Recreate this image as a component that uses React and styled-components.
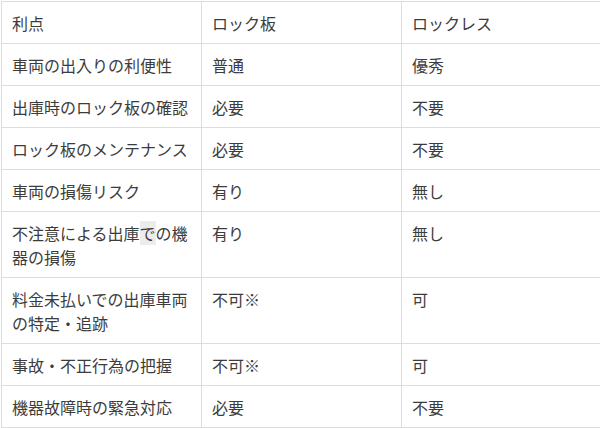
import styled, { createGlobalStyle } from "styled-components";

const GlobalStyle = createGlobalStyle`
  body {
    margin: 0;
    background: #fff;
    font-family: "Noto Sans CJK JP", "Noto Sans", sans-serif;
    color: #3c3c3c;
  }
`;

const Wrapper = styled.div`
  padding: 1px 0 0 1px;
  width: 600px;
  overflow: hidden;
`;

const Table = styled.table`
  border-collapse: collapse;
  table-layout: fixed;
  width: 601px;
  font-size: 16px;
  line-height: 24px;
`;

const Cell = styled.td`
  border: 1px solid #dddddd;
  padding: 8.5px 10px;
  vertical-align: top;
  text-align: left;
  font-weight: 400;
  width: 200px;
  box-sizing: border-box;
`;

// faint grey box round one character, as in the source page
const Marked = styled.span`
  background: #ececec;
`;

const rows = [
  ["車両の出入りの利便性", "普通", "優秀"],
  ["出庫時のロック板の確認", "必要", "不要"],
  ["ロック板のメンテナンス", "必要", "不要"],
  ["車両の損傷リスク", "有り", "無し"],
  [
    <>
      不注意による出庫<Marked>で</Marked>の機器の損傷
    </>,
    "有り",
    "無し",
  ],
  ["料金未払いでの出庫車両の特定・追跡", "不可※", "可"],
  ["事故・不正行為の把握", "不可※", "可"],
  ["機器故障時の緊急対応", "必要", "不要"],
];

export default function App() {
  return (
    <>
      <GlobalStyle />
      <Wrapper>
        <Table>
          <tbody>
            <tr>
              <Cell as="th">利点</Cell>
              <Cell as="th">ロック板</Cell>
              <Cell as="th">ロックレス</Cell>
            </tr>
            {rows.map((r, i) => (
              <tr key={i}>
                {r.map((c, j) => (
                  <Cell key={j}>{c}</Cell>
                ))}
              </tr>
            ))}
          </tbody>
        </Table>
      </Wrapper>
    </>
  );
}
